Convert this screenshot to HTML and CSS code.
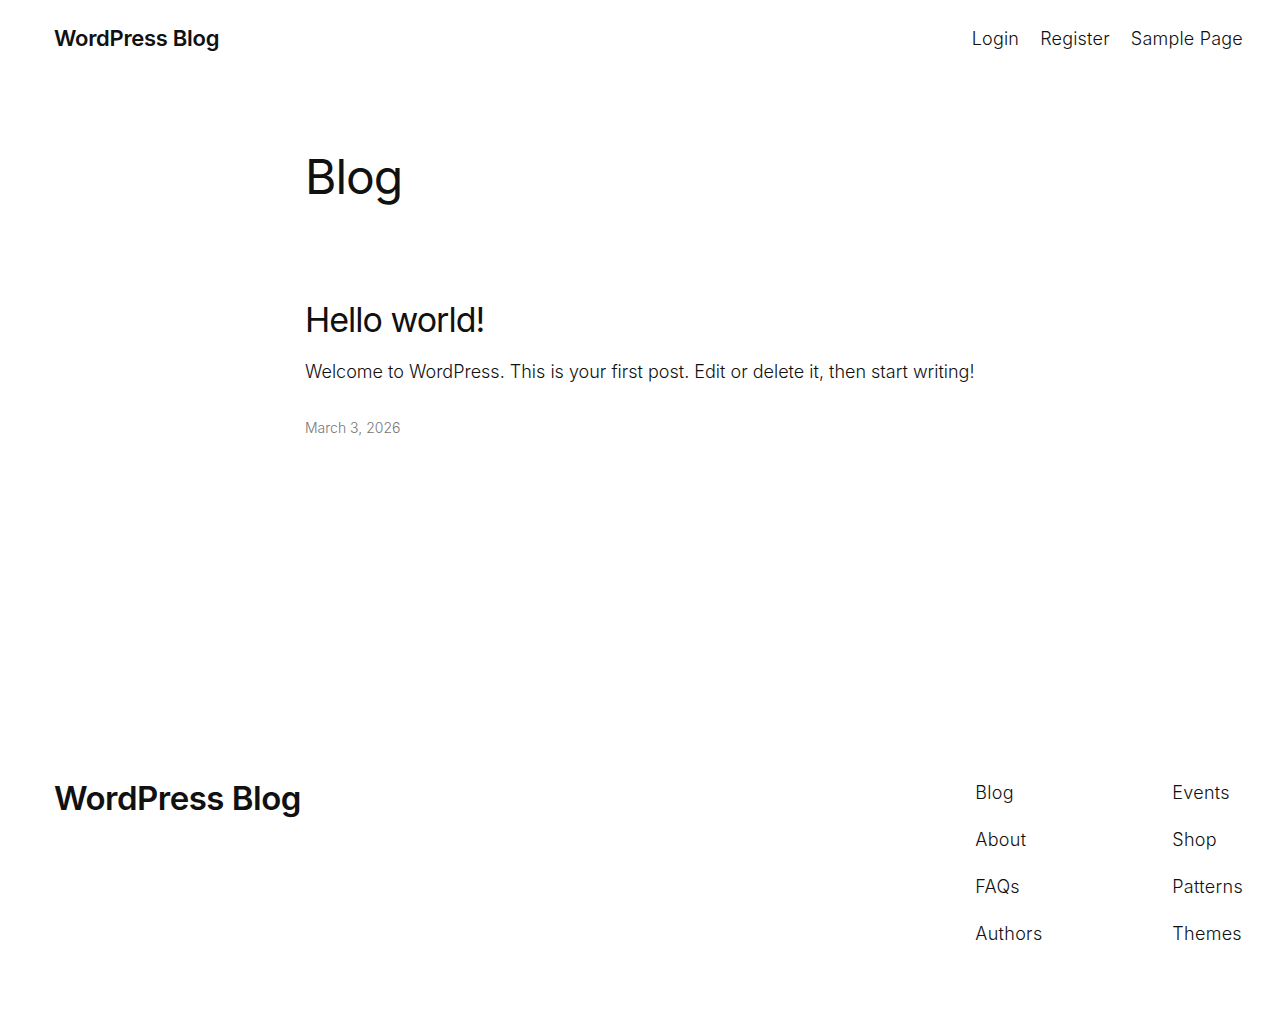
FILE: index.html
```html
<!DOCTYPE html>
<html lang="en">
<head>
<meta charset="utf-8">
<title>Blog – WordPress Blog</title>
<link rel="stylesheet" href="styles.css">
</head>
<body>
<header class="site-header">
  <a class="site-title" href="#">WordPress Blog</a>
  <nav class="top-nav">
    <a href="#">Login</a>
    <a href="#">Register</a>
    <a href="#">Sample Page</a>
  </nav>
</header>
<main class="content">
  <h1 class="page-title">Blog</h1>
  <article class="post">
    <h2 class="post-title"><a href="#">Hello world!</a></h2>
    <p class="excerpt">Welcome to WordPress. This is your first post. Edit or delete it, then start writing!</p>
    <div class="post-date">March 3, 2026</div>
  </article>
</main>
<footer class="site-footer">
  <a class="footer-title" href="#">WordPress Blog</a>
  <div class="footer-nav">
    <nav class="footer-col">
      <a href="#">Blog</a>
      <a href="#">About</a>
      <a href="#">FAQs</a>
      <a href="#">Authors</a>
    </nav>
    <nav class="footer-col">
      <a href="#">Events</a>
      <a href="#">Shop</a>
      <a href="#">Patterns</a>
      <a href="#">Themes</a>
    </nav>
  </div>
</footer>
</body>
</html>
```

FILE: styles.css
```css
* { box-sizing: border-box; }
html, body { margin: 0; padding: 0; background: #fff; }
body {
  font-family: Inter, "Noto Sans", sans-serif;
  color: #111;
  letter-spacing: -0.3px;
  height: 1024px;
  display: flex;
  flex-direction: column;
}
a { color: inherit; text-decoration: none; }

.site-header {
  display: flex;
  justify-content: space-between;
  align-items: center;
  padding: 0 37px 0 54px;
  height: 76px;
}
.site-title {
  font-size: 22px;
  font-weight: 600;
  letter-spacing: -0.3px;
}
.top-nav {
  display: flex;
  gap: 21px;
  font-size: 18px;
  font-weight: 300;
  letter-spacing: 0.2px;
}

.content {
  width: 670px;
  margin: 0 auto;
  flex: 1;
}
.page-title {
  font-size: 48px;
  font-weight: 400;
  letter-spacing: -1px;
  margin: 72px 0 0;
  line-height: 1.2;
}
.post { margin-top: 94px; }
.post-title {
  font-size: 34px;
  font-weight: 400;
  letter-spacing: -1px;
  margin: 0;
  line-height: 1.2;
}
.excerpt {
  font-size: 18px;
  font-weight: 300;
  letter-spacing: 0;
  margin: 18px 0 0;
  line-height: 1.5;
}
.post-date {
  font-size: 14px;
  color: #777;
  font-weight: 300;
  letter-spacing: 0;
  margin-top: 34px;
}

.site-footer {
  display: flex;
  justify-content: space-between;
  align-items: flex-start;
  padding: 0 37px 0 54px;
  height: 250px;
}
.footer-title {
  font-size: 33px;
  font-weight: 600;
  letter-spacing: -0.5px;
  margin-top: 4px;
}
.footer-nav {
  display: flex;
  margin-top: 8px;
}
.footer-col {
  display: flex;
  flex-direction: column;
  gap: 26px;
  font-size: 18px;
  font-weight: 300;
  letter-spacing: 0.3px;
  width: 197px;
}
.footer-col:last-child { width: auto; }
```
